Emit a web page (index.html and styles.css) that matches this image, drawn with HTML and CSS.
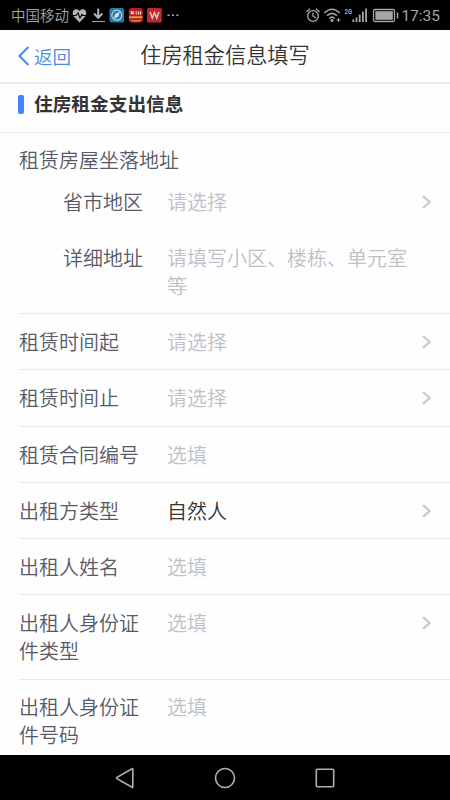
FILE: index.html
```html
<!DOCTYPE html>
<html lang="zh-CN">
<head>
<meta charset="utf-8">
<title>住房租金信息填写</title>
<link rel="stylesheet" href="styles.css">
</head>
<body>
<div class="status">
  <span class="carrier">中国移动</span>
  <svg class="notices" width="110" height="30" viewBox="0 0 110 30">
    <path d="M9.500 22.500L3.800 16.500C1.500 13.500 3 9.500 6 9.300Q8.300 9 9.500 11Q10.700 9 13 9.300C16 9.500 17.500 13.500 15.200 16.500Z" fill="#b5b5b5"/>
    <path d="M2 15.500H6L8 12.800L10 18L12 14.500L13 15.500H17" fill="none" stroke="#000" stroke-width="1.100"/>
    <path d="M28.200 8.500V17M24 13.500L28.200 17.800L32.400 13.500" fill="none" stroke="#b5b5b5" stroke-width="2"/>
    <path d="M22 21.500H35" stroke="#999" stroke-width="1.200"/>
    <rect x="39.500" y="8" width="14.500" height="14.500" rx="2" fill="#217ca8"/>
    <circle cx="46.800" cy="15.200" r="5" fill="none" stroke="#b5d2df" stroke-width="1.200"/>
    <path d="M50 11.500L48.300 16.600L43.600 19L45.200 14Z" fill="#d3e5ec"/>
    <rect x="58.800" y="8" width="14" height="14.500" rx="3" fill="#b91e24"/>
    <path d="M60.500 11.800H64M60.800 13.500H64M65.500 11.800H67M68.500 11.500V14.500M70.500 11.500V14.500M65.500 13.800H67" stroke="#eed6cf" stroke-width="1.300"/>
    <path d="M59 17.200H72.500" stroke="#d9a735" stroke-width="1.800"/>
    <path d="M61 20Q65.800 22.500 70.600 20" fill="none" stroke="#d9a735" stroke-width="1.300"/>
    <rect x="77" y="8" width="14.800" height="14.500" rx="1.500" fill="#bc282c"/>
    <path d="M80 12L82.300 18L84.500 12.500L86.700 18L89 12" fill="none" stroke="#e7c9c9" stroke-width="1.500"/>
    <path d="M97.500 14.500h2v1.500h-2zM102 14.500h2v1.500h-2zM106.400 14.500h2v1.500h-2z" fill="#aaa"/>
  </svg>
  <svg class="signals" width="100" height="30" viewBox="0 0 100 30">
    <g fill="none" stroke="#a6a6a6" stroke-width="1.300">
      <circle cx="9" cy="16" r="5.300"/>
      <path d="M9 12.500V16.200L12 18M2.500 12L6 8.800M12 8.800L15.500 12"/>
      <path d="M20.500 13Q28 5.500 35.500 13M23 15.800Q28 10.800 33 15.800M25.300 18.500Q28 15.800 30.800 18.500" stroke-width="1.600"/>
      <path d="M34.500 18V22M32.500 20H36.500" stroke-width="1"/>
      <path d="M49.300 22V19.500M52.500 22V17.500M55.700 22V14.500M58.900 22V11.500M62.100 22V8.500" stroke-width="1.800"/>
      <rect x="69.500" y="9.500" width="21" height="12" rx="1.500"/>
      <path d="M93.500 12.500V18.500" stroke-width="1.500"/>
    </g>
    <circle cx="28" cy="20.500" r="1.500" fill="#a6a6a6"/>
    <rect x="71.300" y="11.200" width="17.500" height="8.600" fill="#a6a6a6"/>
    <text class="network" x="40.500" y="13.500" textLength="7.500" lengthAdjust="spacingAndGlyphs">2G</text>
  </svg>
  <span class="clock">17:35</span>
</div>
<header class="header">
  <a class="back"><svg width="12" height="20" viewBox="0 0 12 20"><path d="M10.500 1L1.500 10L10.500 19"/></svg>返回</a>
  <h1 class="title">住房租金信息填写</h1>
</header>
<main class="form">
  <h2 class="section">住房租金支出信息</h2>
  <section class="address">
    <div class="heading">租赁房屋坐落地址</div>
    <div class="field sub"><span class="label">省市地区</span><span class="value">请选择</span><svg class="arrow" viewBox="0 0 9 14"><path d="M1 1L7.500 7L1 13"/></svg></div>
    <div class="field sub detail"><span class="label">详细地址</span><span class="value">请填写小区、楼栋、单元室等</span></div>
  </section>
  <div class="field row"><span class="label">租赁时间起</span><span class="value">请选择</span><svg class="arrow" viewBox="0 0 9 14"><path d="M1 1L7.500 7L1 13"/></svg></div>
  <div class="field row"><span class="label">租赁时间止</span><span class="value">请选择</span><svg class="arrow" viewBox="0 0 9 14"><path d="M1 1L7.500 7L1 13"/></svg></div>
  <div class="field row"><span class="label">租赁合同编号</span><span class="value">选填</span></div>
  <div class="field row"><span class="label">出租方类型</span><span class="value filled">自然人</span><svg class="arrow" viewBox="0 0 9 14"><path d="M1 1L7.500 7L1 13"/></svg></div>
  <div class="field row"><span class="label">出租人姓名</span><span class="value">选填</span></div>
  <div class="field row tall"><span class="label">出租人身份证件类型</span><span class="value">选填</span><svg class="arrow" viewBox="0 0 9 14"><path d="M1 1L7.500 7L1 13"/></svg></div>
  <div class="field row last"><span class="label">出租人身份证件号码</span><span class="value">选填</span></div>
</main>
<nav class="navbar">
  <svg width="20" height="22" viewBox="0 0 20 22"><path d="M17.800 2V20Q17.800 20.800 17 20.300L2 11.700Q1.200 11 2 10.400L17 1.800Q17.800 1.300 17.800 2Z"/></svg>
  <svg width="22" height="22" viewBox="0 0 22 22"><circle cx="11" cy="11" r="9.500"/></svg>
  <svg width="20" height="20" viewBox="0 0 20 20"><rect x="1.300" y="1.300" width="17.400" height="17.400" rx="1"/></svg>
</nav>
</body>
</html>
```
FILE: styles.css
```css
* { box-sizing: border-box; }
body {
  margin: 0;
  height: 800px;
  display: flex;
  flex-direction: column;
  overflow: hidden;
  background: #fefefe;
  color: #575966;
  font: 350 20px/28px "Noto Sans CJK SC", sans-serif;
}
svg { display: block; flex: none; }
.status {
  flex: none;
  height: 30px;
  padding: 0 10px 0 11px;
  display: flex;
  align-items: center;
  background: #000;
  color: #a6a6a6;
}
.carrier { font-size: 14.5px; line-height: 30px; width: 59px; white-space: nowrap; }
.signals { margin-left: auto; margin-right: -1px; }
.network { font: bold 7.5px Roboto, sans-serif; fill: #a6a6a6; }
.clock { font: 15.5px/30px Roboto, sans-serif; width: 37px; padding-top: 1px; display: flex; justify-content: flex-end; white-space: nowrap; }
.header {
  flex: none;
  height: 54px;
  padding: 0 18px;
  display: grid;
  grid-template-columns: 1fr auto 1fr;
  align-items: center;
  border-bottom: 2px solid #e9e9ec;
}
.back { display: flex; align-items: center; gap: 4px; padding-bottom: 1px; color: #4a87ea; font-size: 18.5px; }
.back svg { fill: none; stroke: #4a87ea; stroke-width: 2; }
.title { margin: 0; padding-bottom: 4px; color: #333; font-size: 21.2px; font-weight: 350; line-height: 48px; }
.form { flex: 1; min-height: 0; overflow: hidden; }
.section {
  height: 49px;
  margin: 0;
  padding: 5px 18px;
  display: flex;
  gap: 10px;
  border-bottom: 1px solid #eee;
  color: #333;
  font-size: 18.7px;
  font-weight: 700;
}
.section::before { content: ""; width: 6px; height: 19px; margin-top: 6px; border-radius: 2px; background: #4285f4; }
.address { padding-top: 13px; height: 180px; }
.field { display: flex; margin-left: 19px; padding-right: 19px; }
.heading { margin-left: 19px; }
.label { width: 120px; margin-right: 28px; flex: none; }
.value { width: 245px; color: #bfc0c9; }
.filled { color: #333; }
.sub { margin-top: 14px; }
.sub .label { padding-left: 44px; width: 124px; margin-right: 24px; white-space: nowrap; }
.detail { margin-top: 28px; }
.row { padding-top: 14.2px; padding-bottom: 13.1px; border-top: 1px solid #e9e9ec; }
.tall { padding-top: 13.4px; padding-bottom: 14.4px; }
.last { padding-top: 12.7px; }
.arrow { width: 9px; height: 14px; margin: 7px 0 0 auto; fill: none; stroke: #c8c9cf; stroke-width: 2.3; }
.navbar {
  flex: none;
  height: 45px;
  padding: 0 115px;
  display: flex;
  align-items: center;
  justify-content: space-between;
  background: #000;
}
.navbar svg { fill: none; stroke: #b0b0b0; stroke-width: 1.6; }
```
